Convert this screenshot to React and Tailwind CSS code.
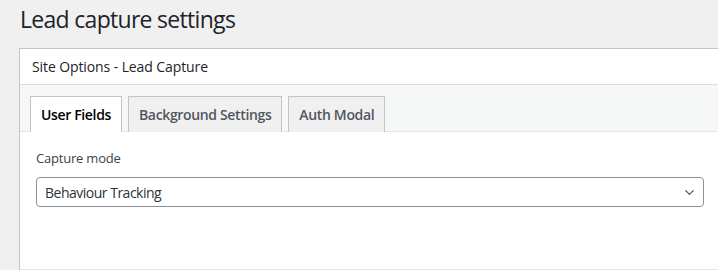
import { ChevronDown } from 'lucide-react';

const TABS = [
  { key: 'user_fields', label: 'User Fields' },
  { key: 'background', label: 'Background Settings' },
  { key: 'auth_modal', label: 'Auth Modal' },
];

const App = () => {
  const active = 'user_fields';

  return (
    <div
      className="w-[718px] h-[270px] overflow-hidden bg-[#f0f0f1] pl-[19px]"
      style={{ fontFamily: '"Open Sans", "Noto Sans", sans-serif' }}
    >
      <h1 className="pl-px pt-[4px] h-[48px] text-[23px] leading-[30px] tracking-[-0.7px] text-[#1d2327] font-normal">
        Lead capture settings
      </h1>

      <div className="w-[710px] h-[222px] border-l border-t border-[#c3c4c7] bg-white flex flex-col">
        {/* Panel header */}
        <div className="h-[36px] flex items-center px-[12px] border-b border-[#dcdcde] text-[14px] tracking-[-0.1px] text-[#1d2327]">
          Site Options - Lead Capture
        </div>

        {/* Tabs */}
        <div className="h-[47px] bg-[#f6f7f7] border-b border-[#e2e4e7] pt-[11px] pl-[10px] flex gap-[6px] items-end">
          {TABS.map((tab) => (
            <div
              key={tab.key}
              className={`h-[36px] -mb-px px-[10px] flex items-center border border-b-0 border-[#c3c4c7] text-[14px] font-semibold tracking-[-0.35px]
                ${tab.key === active ? 'bg-white text-[#000]' : 'bg-[#f0f0f1] text-[#50575e]'}`}
            >
              {tab.label}
            </div>
          ))}
        </div>

        {/* Content */}
        <div className="flex-1 px-[16px] pt-[17px] border-b border-[#e2e4e7]">
          <label className="block text-[13px] leading-[18px] tracking-[-0.2px] text-[#3c434a] mb-[10px]">
            Capture mode
          </label>
          <div className="w-[668px] h-[30px] border border-[#8c8f94] rounded-[4px] flex items-center justify-between pl-[8px] pr-[6px] text-[14px] tracking-[-0.5px] text-[#2c3338]">
            <span>Behaviour Tracking</span>
            <ChevronDown size={15} strokeWidth={2} className="text-[#50575e]" />
          </div>
        </div>
      </div>
    </div>
  );
};

export default App;
